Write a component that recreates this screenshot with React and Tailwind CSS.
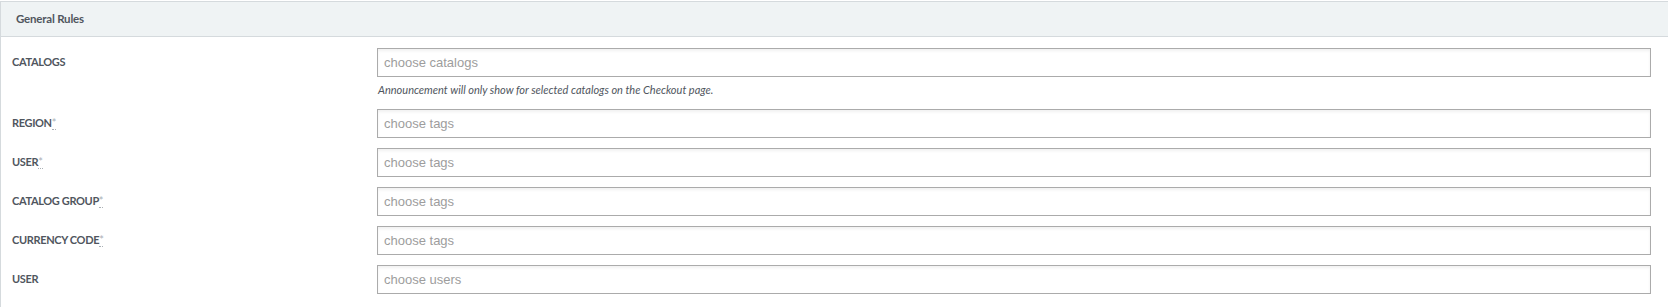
import React from "react";

const rows = [
  { label: "REGION", req: true, ph: "choose tags" },
  { label: "USER", req: true, ph: "choose tags" },
  { label: "CATALOG GROUP", req: true, ph: "choose tags" },
  { label: "CURRENCY CODE", req: true, ph: "choose tags" },
  { label: "USER", req: false, ph: "choose users" },
];

function Field({ label, req, ph }) {
  return (
    <div className="grid grid-cols-[376px_1fr] items-center pr-[17px]">
      <div className="pl-[11px] text-[11px] font-bold text-[#50565e] tracking-[-0.35px]">
        {label}
        {req && (
          <abbr className="font-normal text-[#aab0b5] no-underline border-b border-dotted border-[#aab0b5]" title="required">*</abbr>
        )}
      </div>
      <div className="h-[29px] border border-[#ababab] bg-white shadow-[inset_0_2px_3px_rgba(0,0,0,0.06)] flex items-center px-[6px] text-[13px] text-[#9d9d9d] font-['Liberation_Sans',Arial,sans-serif]">
        {ph}
      </div>
    </div>
  );
}

export default function App() {
  return (
    <div className="w-full h-[307px] bg-white font-['Lato','Noto_Sans',sans-serif]">
      <div className="mt-px border-l border-t border-[#d5dadd] h-[306px]">
        <div className="h-[35px] bg-[#eff3f4] border-b border-[#d5dadd] flex items-center pl-[15px] text-[11.5px] font-bold text-[#50565e] tracking-[-0.2px]">
          General Rules
        </div>
        <div className="pt-[11px] flex flex-col">
          <Field label="CATALOGS" req={false} ph="choose catalogs" />
          <div className="grid grid-cols-[376px_1fr] pr-[17px] pt-[5px] pb-[11px]">
            <div />
            <div className="text-[11px] italic text-[#50565e] leading-[16px] pl-[1px]">
              Announcement will only show for selected catalogs on the Checkout page.
            </div>
          </div>
          <div className="flex flex-col gap-[10px]">
            {rows.map((r, i) => (
              <Field key={i} {...r} />
            ))}
          </div>
        </div>
      </div>
    </div>
  );
}
